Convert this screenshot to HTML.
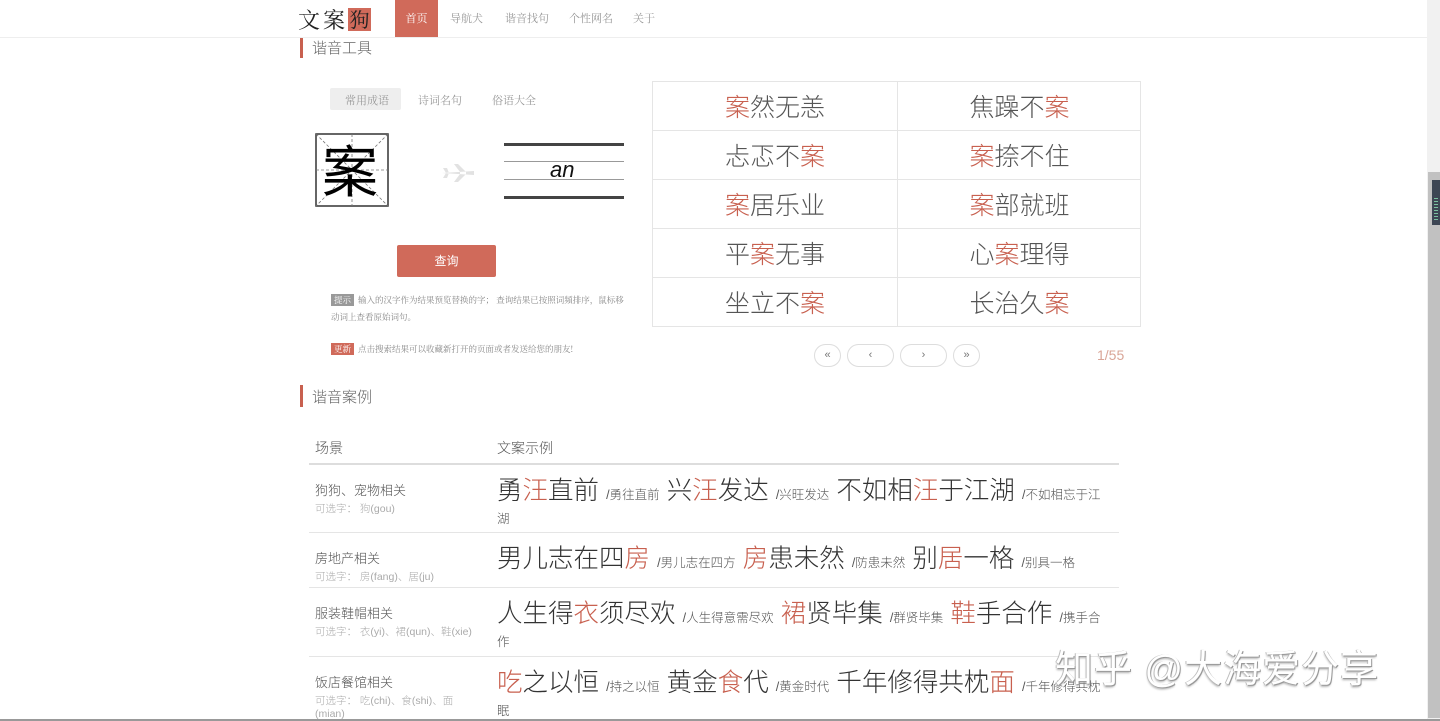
<!DOCTYPE html>
<html style="overflow:hidden;height:721px"><head><meta charset="utf-8">
<style>
*{margin:0;padding:0;box-sizing:border-box}
body{width:1440px;height:721px;overflow:hidden;background:#fff;font-family:"Liberation Sans","Noto Sans CJK SC",sans-serif;color:#555;position:relative}
.a{position:absolute;white-space:nowrap}
.r{color:#c8604f}
.hdr{position:absolute;left:0;top:0;width:1427px;height:38px;border-bottom:1px solid #eee}
.nav{position:absolute;top:0;height:37px;line-height:37px;font-size:11px;color:#999;font-family:"Noto Serif CJK SC",serif}
.bar{position:absolute;width:3px;background:#c8604f}
.ttl{font-size:15px;color:#666;font-weight:300}
.grid{position:absolute;left:652px;top:81px;width:489px;height:246px;border:1px solid #e5e5e5}
.grid div{position:absolute;width:244px;height:49px;line-height:52px;text-align:center;font-size:25px;font-weight:300;color:#555;border-bottom:1px solid #e5e5e5}
.pg{position:absolute;top:344px;height:23px;border:1px solid #ddd;border-radius:12px;font-size:11px;color:#777;text-align:center;line-height:20px}
.row{position:absolute;left:309px;width:810px;border-bottom:1px solid #e5e5e5}
.sc{position:absolute;left:6px;font-size:13px;color:#555;font-weight:300}
.sc small{display:block;font-size:10.5px;color:#aaa;margin-top:2px}
.ex{position:absolute;left:188px;width:613px;font-size:25.5px;font-weight:300;color:#333;line-height:24px;white-space:normal}
.ex s{text-decoration:none;font-size:12.5px;color:#555;line-height:12px}
</style></head><body>
<div class="hdr"></div>
<div class="a" style="left:298px;top:4px;font-size:22px;color:#222;font-family:'Noto Serif CJK SC',serif;letter-spacing:3px">文案</div>
<div class="a" style="left:348px;top:8px;width:23px;height:23px;background:#d06a5a;color:#222;font-size:20px;line-height:22px;text-align:center;font-family:'Noto Serif CJK SC',serif">狗</div>
<div class="nav" style="left:395px;width:43px;background:#d06a5a;color:#fff;text-align:center">首页</div>
<div class="nav" style="left:450px">导航犬</div>
<div class="nav" style="left:505px">谐音找句</div>
<div class="nav" style="left:569px">个性网名</div>
<div class="nav" style="left:633px">关于</div>

<div class="bar" style="left:300px;top:38px;height:20px"></div>
<div class="a ttl" style="left:312px;top:37px">谐音工具</div>

<div class="a" style="left:330px;top:88px;width:71px;height:22px;background:#eee;border-radius:2px"></div>
<div class="a" style="left:345px;top:92px;font-size:11px;color:#999;font-family:'Noto Serif CJK SC',serif">常用成语</div>
<div class="a" style="left:418px;top:92px;font-size:11px;color:#999;font-family:'Noto Serif CJK SC',serif">诗词名句</div>
<div class="a" style="left:492px;top:92px;font-size:11px;color:#999;font-family:'Noto Serif CJK SC',serif">俗语大全</div>

<svg class="a" style="left:315px;top:133px" width="75" height="75">
<rect x="1" y="1" width="72" height="72" fill="#fff" stroke="#333" stroke-width="1.5"/>
<g stroke="#777" stroke-dasharray="3,2" stroke-width="0.8"><line x1="1" y1="37" x2="73" y2="37"/><line x1="37" y1="1" x2="37" y2="73"/><line x1="1" y1="1" x2="73" y2="73"/><line x1="73" y1="1" x2="1" y2="73"/></g>
</svg>
<div class="a" style="left:322px;top:136px;font-size:56px;line-height:66px;color:#000;font-family:'Noto Sans CJK SC',sans-serif">案</div>
<svg class="a" style="left:440px;top:162px" width="36" height="22"><path d="M2 11 L34 9 L34 13 Z M14 2 L20 10 L20 12 L14 20 L18 20 L26 12 L26 10 L18 2Z M3 6 L6 11 L3 16 L7 16 L9 11 L7 6Z" fill="#e2e2e2"/></svg>
<div class="a" style="left:504px;top:143px;width:120px;height:3px;background:#444"></div>
<div class="a" style="left:504px;top:161px;width:120px;height:1px;background:#999"></div>
<div class="a" style="left:504px;top:179px;width:120px;height:1px;background:#999"></div>
<div class="a" style="left:504px;top:196px;width:120px;height:3px;background:#444"></div>
<div class="a" style="left:550px;top:157px;font-size:22px;font-style:italic;color:#111">an</div>

<div class="a" style="left:397px;top:245px;width:99px;height:32px;background:#d06a5a;border-radius:2px;color:#fff;font-size:12px;text-align:center;line-height:32px">查询</div>

<div class="a" style="left:331px;top:292px;font-size:8.5px;color:#888;line-height:17px;white-space:normal;width:300px;font-family:'Noto Serif CJK SC',serif"><span style="background:#999;color:#fff;padding:0 3px;margin-right:4px">提示</span>输入的汉字作为结果预览替换的字； 查询结果已按照词頻排序，鼠标移动词上查看原始词句。</div>
<div class="a" style="left:331px;top:343px;font-size:8.5px;color:#888;line-height:12px;font-family:'Noto Serif CJK SC',serif"><span style="background:#d06a5a;color:#fff;padding:0 3px;margin-right:4px">更新</span>点击搜索结果可以收藏新打开的页面或者发送给您的朋友!</div>

<div class="grid">
<div style="left:0;top:0"><span class="r">案</span>然无恙</div>
<div style="left:244px;top:0;border-left:1px solid #e5e5e5">焦躁不<span class="r">案</span></div>
<div style="left:0;top:49px">忐忑不<span class="r">案</span></div>
<div style="left:244px;top:49px;border-left:1px solid #e5e5e5"><span class="r">案</span>捺不住</div>
<div style="left:0;top:98px"><span class="r">案</span>居乐业</div>
<div style="left:244px;top:98px;border-left:1px solid #e5e5e5"><span class="r">案</span>部就班</div>
<div style="left:0;top:147px">平<span class="r">案</span>无事</div>
<div style="left:244px;top:147px;border-left:1px solid #e5e5e5">心<span class="r">案</span>理得</div>
<div style="left:0;top:196px;border-bottom:none">坐立不<span class="r">案</span></div>
<div style="left:244px;top:196px;border-left:1px solid #e5e5e5;border-bottom:none">长治久<span class="r">案</span></div>
</div>

<div class="pg" style="left:814px;width:27px">«</div>
<div class="pg" style="left:847px;width:47px">‹</div>
<div class="pg" style="left:900px;width:47px">›</div>
<div class="pg" style="left:953px;width:27px">»</div>
<div class="a" style="left:1097px;top:347px;font-size:14px;color:#d9a597;font-weight:300">1/55</div>

<div class="bar" style="left:300px;top:385px;height:22px"></div>
<div class="a ttl" style="left:312px;top:386px">谐音案例</div>

<div class="a" style="left:315px;top:438px;font-size:14px;color:#555;font-weight:300">场景</div>
<div class="a" style="left:497px;top:438px;font-size:14px;color:#555;font-weight:300">文案示例</div>
<div class="a" style="left:309px;top:463px;width:810px;height:2px;background:#ddd"></div>

<div class="row" style="top:465px;height:68px">
<div class="sc" style="top:15px">狗狗、宠物相关<small>可选字： 狗(gou)</small></div>
<div class="ex" style="top:14px">勇<span class="r">汪</span>直前 <s>/勇往直前</s> 兴<span class="r">汪</span>发达 <s>/兴旺发达</s> 不如相<span class="r">汪</span>于江湖 <s>/不如相忘于江湖</s></div>
</div>
<div class="row" style="top:533px;height:55px">
<div class="sc" style="top:15px">房地产相关<small>可选字： 房(fang)、居(ju)</small></div>
<div class="ex" style="top:14px">男儿志在四<span class="r">房</span> <s>/男儿志在四方</s> <span class="r">房</span>患未然 <s>/防患未然</s> 别<span class="r">居</span>一格 <s>/别具一格</s></div>
</div>
<div class="row" style="top:588px;height:69px">
<div class="sc" style="top:15px">服装鞋帽相关<small>可选字： 衣(yi)、裙(qun)、鞋(xie)</small></div>
<div class="ex" style="top:14px">人生得<span class="r">衣</span>须尽欢 <s>/人生得意需尽欢</s> <span class="r">裙</span>贤毕集 <s>/群贤毕集</s> <span class="r">鞋</span>手合作 <s>/携手合作</s></div>
</div>
<div class="row" style="top:657px;height:64px;border-bottom:none">
<div class="sc" style="top:15px;width:160px;white-space:normal">饭店餐馆相关<small>可选字： 吃(chi)、食(shi)、面(mian)</small></div>
<div class="ex" style="top:14px"><span class="r">吃</span>之以恒 <s>/持之以恒</s> 黄金<span class="r">食</span>代 <s>/黄金时代</s> 千年修得共枕<span class="r">面</span> <s>/千年修得共枕眠</s></div>
</div>

<div class="a" style="left:1055px;top:638px;font-size:38px;color:#fff;letter-spacing:1px;text-shadow:1px 1px 0 #999,-1px 0 0 #bbb,0 2px 2px #aaa">知乎 @大海爱分享</div>

<div class="a" style="left:1427px;top:0;width:13px;height:721px;background:#f1f1f1"></div>
<div class="a" style="left:1428px;top:172px;width:12px;height:546px;background:#c1c1c1"></div>
<div class="a" style="left:1432px;top:180px;width:8px;height:45px;background:#3d4654"></div>
<div class="a" style="left:1434px;top:198px;width:4px;height:22px;background:repeating-linear-gradient(#7bc0a0 0 1px,transparent 1px 3px)"></div>
<div class="a" style="left:0;top:719px;width:1440px;height:2px;background:#999"></div>
</body></html>
